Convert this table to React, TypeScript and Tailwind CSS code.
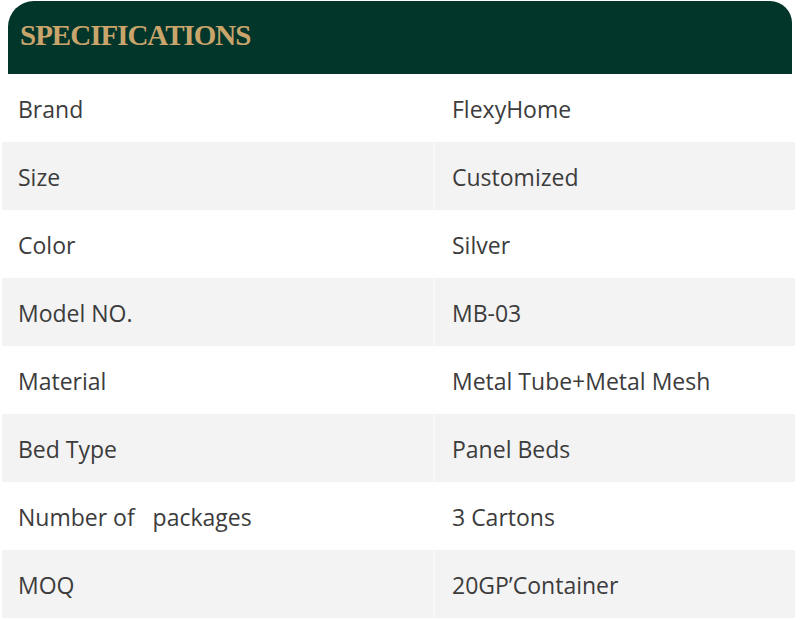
const specs: [string, string][] = [
  ['Brand', 'FlexyHome'],
  ['Size', 'Customized'],
  ['Color', 'Silver'],
  ['Model NO.', 'MB-03'],
  ['Material', 'Metal Tube+Metal Mesh'],
  ['Bed Type', 'Panel Beds'],
  ['Number of \u00a0 packages', '3 Cartons'],
  ['MOQ', "20GP\u2019Container"],
];

export default function App() {
  return (
    <div className="w-[800px] h-[620px] bg-white font-['Open_Sans',sans-serif]">
      <div className="ml-[8px] mt-[1px] w-[784px] h-[73px] bg-[#03362a] rounded-tl-[26px] rounded-tr-[22px] flex items-center pl-[12px] pb-[4px]">
        <h2 className="font-['Liberation_Serif',serif] font-bold text-[29px] tracking-[-1px] text-[#c9a56c] leading-none">
          SPECIFICATIONS
        </h2>
      </div>
      <div className="ml-[2px] w-[793px]">
        {specs.map(([label, value], i) => (
          <div
            key={label}
            className={`grid grid-cols-[431px_1fr] h-[68px] text-[23px] text-[#3c3c3c] ${i % 2 === 1 ? 'bg-[#f3f3f3]' : 'bg-white'}`}
          >
            <div className="flex items-center pl-[16px] pt-[3px] whitespace-pre">{label}</div>
            <div className={`flex items-center pl-[17px] pt-[3px] border-l-2 ${i % 2 === 1 ? 'border-[#f8f8f8]' : 'border-white'}`}>
              {value}
            </div>
          </div>
        ))}
      </div>
    </div>
  );
}
